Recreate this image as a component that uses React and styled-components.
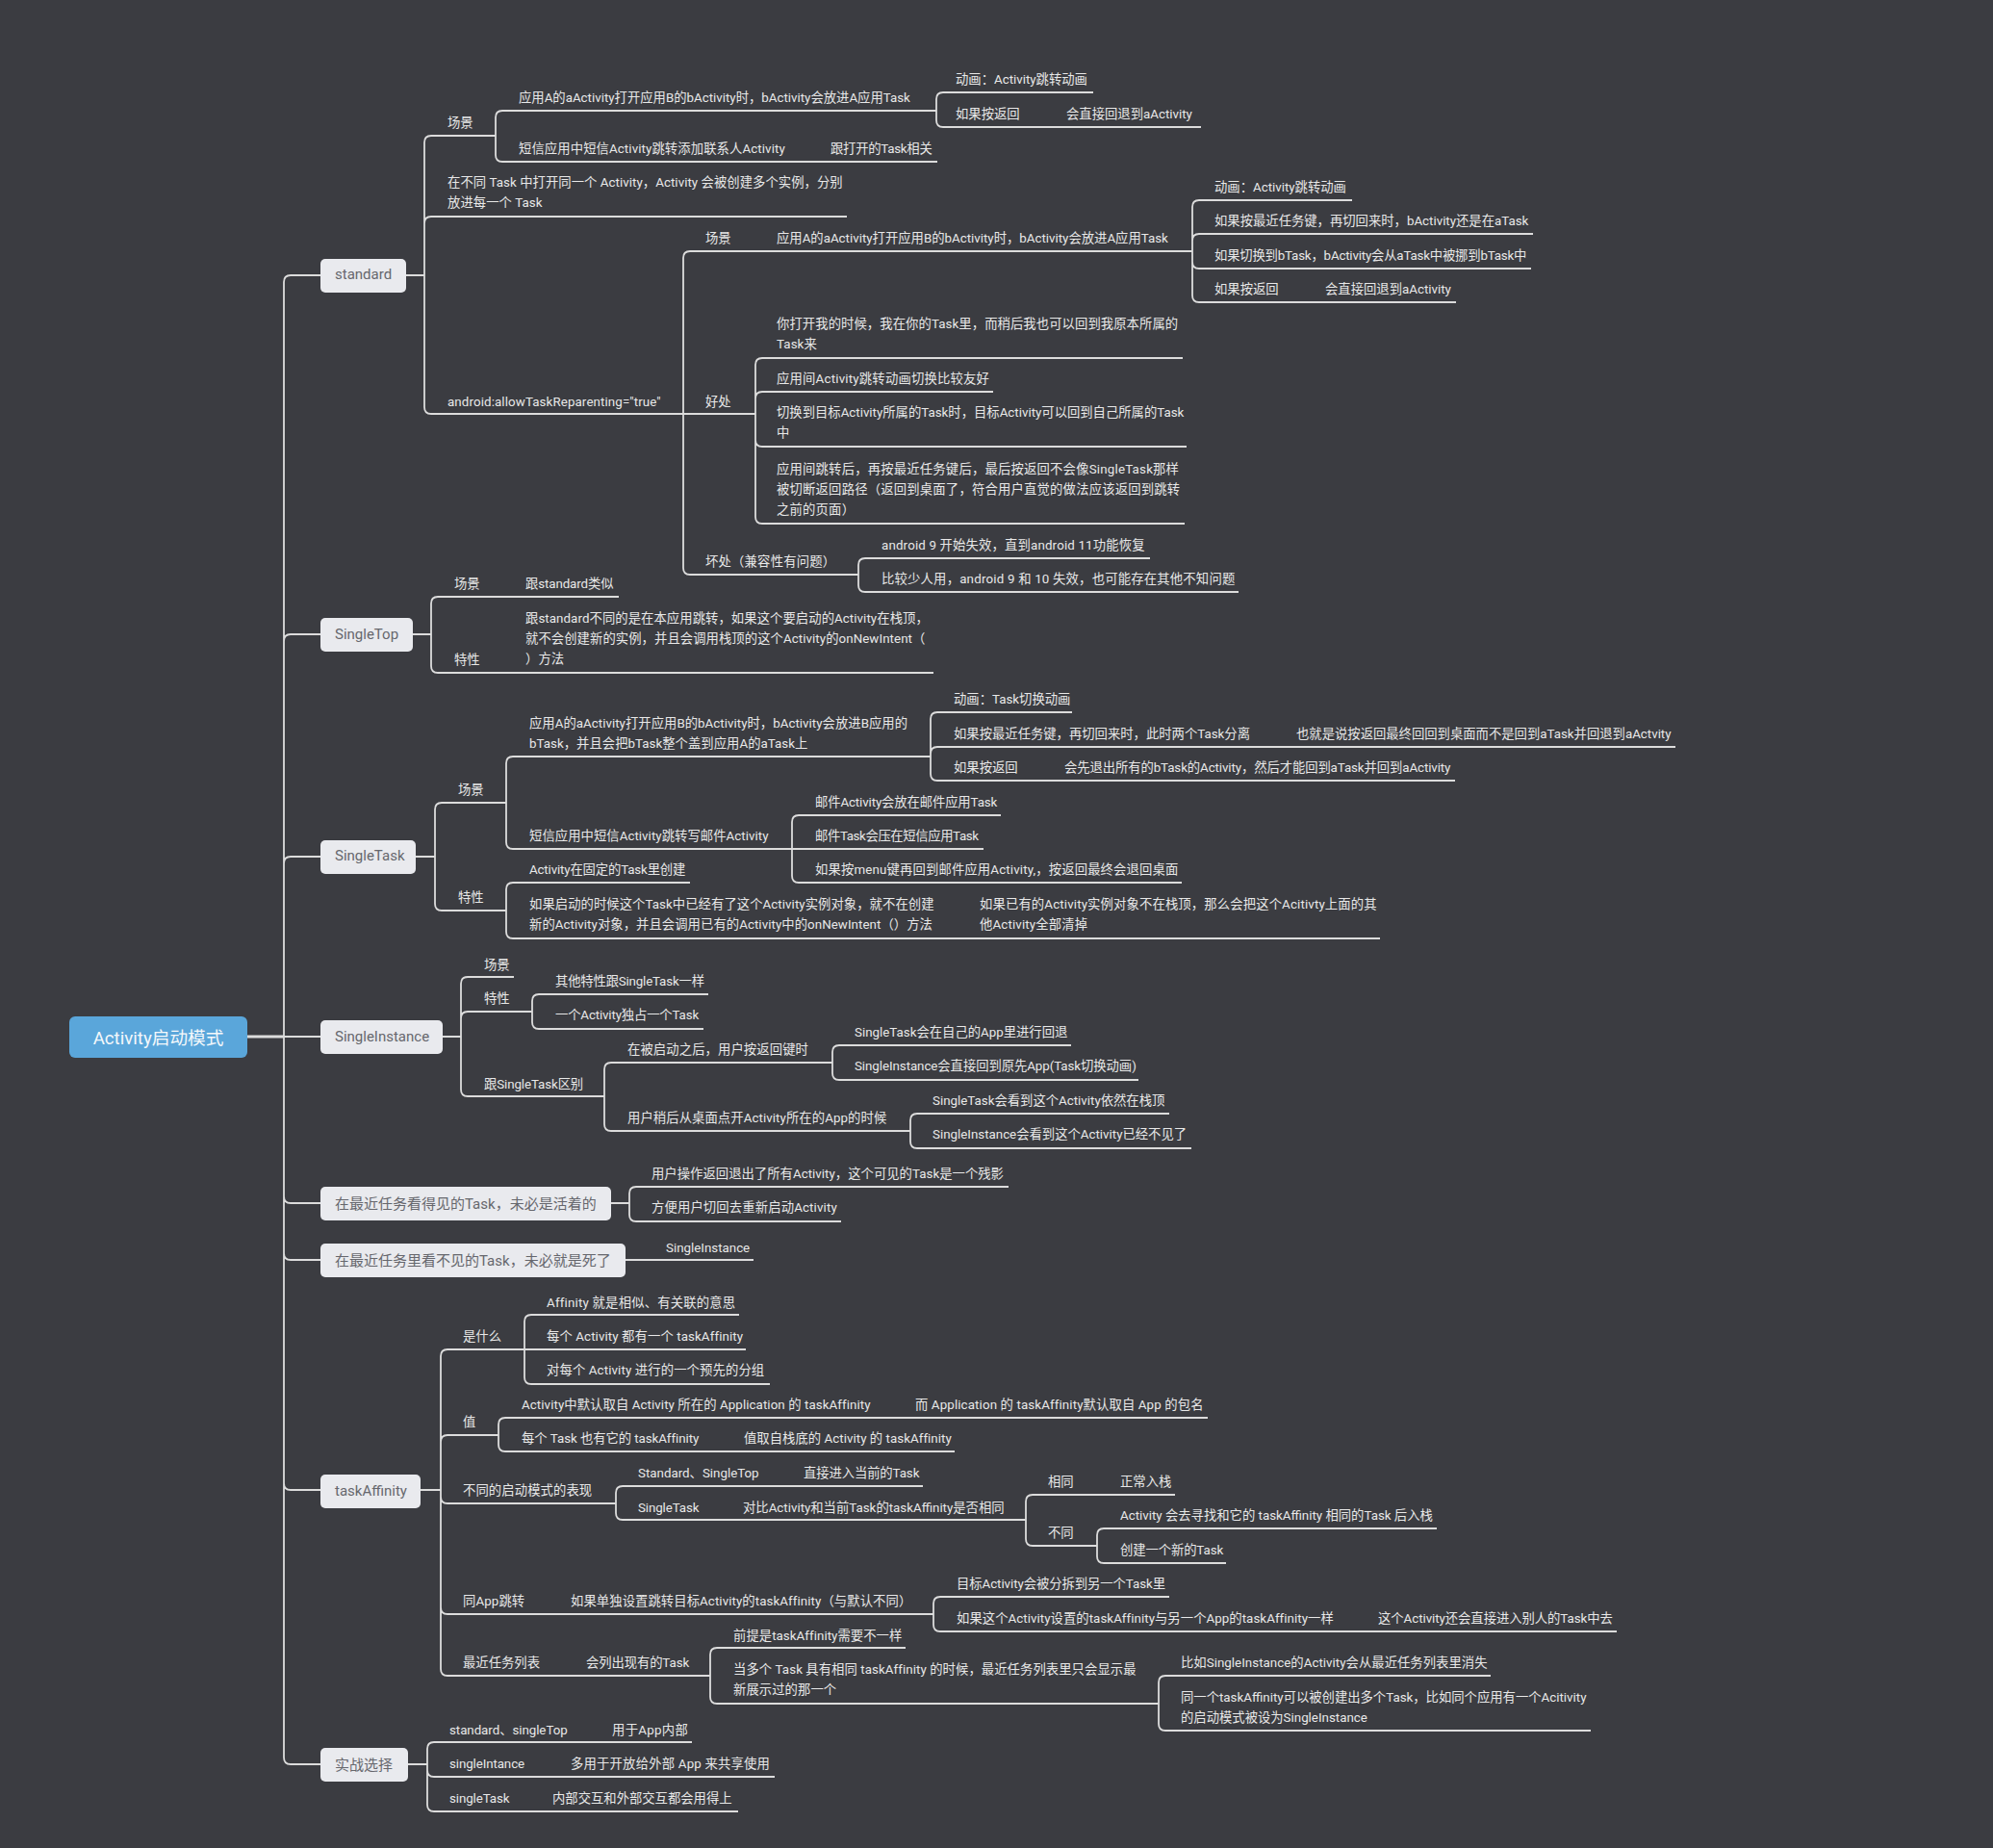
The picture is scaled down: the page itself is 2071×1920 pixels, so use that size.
import styled, { createGlobalStyle } from "styled-components";

const GlobalStyle = createGlobalStyle`
  html, body {
    margin: 0;
    padding: 0;
    background: #3b3c41;
  }
`;

const INK = "#dcdcdc";
const RADIUS = 7;

const Canvas = styled.main`
  position: relative;
  width: 2071px;
  height: 1920px;
  overflow: hidden;
  background: #3b3c41;
  font-family: Roboto, "Noto Sans CJK SC", sans-serif;
`;

const Wires = styled.svg`
  position: absolute;
  inset: 0;
`;

const Wire = styled.path`
  fill: none;
  stroke: ${INK};
  stroke-width: ${(p) => p.$weight || 1.8}px;
`;

const Topic = styled.div`
  position: absolute;
  left: 333px;
  top: ${(p) => p.$cy - 17.5}px;
  width: ${(p) => p.$w}px;
  height: 35px;
  box-sizing: border-box;
  padding: 0 0 2px 15px;
  display: flex;
  align-items: center;
  white-space: nowrap;
  font-size: 15px;
  color: #66676d;
  background: #e9eaee;
  border-radius: 5px;
`;

const RootTopic = styled.div`
  position: absolute;
  left: 72px;
  top: 1056px;
  width: 185px;
  height: 43px;
  box-sizing: border-box;
  padding-bottom: 2px;
  display: flex;
  align-items: center;
  justify-content: center;
  font-size: 18.67px;
  color: #f4f8fb;
  background: #5aa6da;
  border-radius: 6px;
`;

const Note = styled.div`
  position: absolute;
  left: ${(p) => p.$x}px;
  top: ${(p) => p.$y - 10.5}px;
  font-size: 13.33px;
  line-height: 21.33px;
  letter-spacing: ${(p) => p.$track || 0}px;
  white-space: pre;
  color: #e8e8e8;
`;

// [junction x, parent y, parent line start or null, [[child y, child end x], ...]]
const forks = [
  [295, 1077, 257, [[286, 333], [659, 333], [890, 333], [1077, 333], [1250, 333], [1309, 333], [1548, 333], [1833, 333]]],
  [441, 286, 422, [[141, 515], [225, 880], [430, 710]]],
  [515, 141, null, [[115, 973], [168, 974]]],
  [973, 115, null, [[96, 1136], [132, 1248]]],
  [710, 430, null, [[261, 1239], [430, 785], [597, 892]]],
  [1239, 261, null, [[208, 1405], [243, 1593], [279, 1591], [314, 1513]]],
  [785, 430, null, [[372, 1229], [407, 1032], [464, 1233], [544, 1231]]],
  [892, 597, null, [[580, 1195], [615, 1287]]],
  [448, 659, 429, [[620, 643], [699, 970]]],
  [452, 890, 432, [[834, 526], [946, 526]]],
  [526, 834, null, [[786, 967], [882, 823]]],
  [967, 786, null, [[740, 1114], [776, 1741], [811, 1512]]],
  [823, 882, null, [[847, 1040], [882, 1022], [917, 1228]]],
  [526, 946, null, [[917, 717], [975, 1434]]],
  [479, 1077, 460, [[1015, 534], [1051, 553], [1139, 628]]],
  [553, 1051, null, [[1033, 736], [1069, 731]]],
  [628, 1139, null, [[1104, 865], [1175, 946]]],
  [865, 1104, null, [[1086, 1113], [1122, 1183]]],
  [946, 1175, null, [[1157, 1215], [1193, 1238]]],
  [654, 1250, 635, [[1233, 1048], [1269, 874]]],
  [650, 1309, null, [[1309, 783]]],
  [458, 1548, 437, [[1402, 545], [1491, 518], [1562, 640], [1677, 970], [1741, 738]]],
  [545, 1402, null, [[1366, 768], [1402, 775], [1438, 800]]],
  [518, 1491, null, [[1473, 1255], [1508, 992]]],
  [640, 1562, null, [[1544, 959], [1579, 1066]]],
  [1066, 1579, null, [[1553, 1221], [1606, 1140]]],
  [1140, 1606, null, [[1588, 1493], [1624, 1274]]],
  [970, 1677, null, [[1659, 1215], [1695, 1680]]],
  [738, 1741, null, [[1712, 941], [1770, 1204]]],
  [1204, 1770, null, [[1741, 1549], [1798, 1653]]],
  [444, 1833, 424, [[1810, 719], [1846, 805], [1882, 767]]],
];

const forkPath = ([jx, py, start, kids]) => {
  const parts = start ? [`M${start} ${py}H${jx}`] : [];
  kids.forEach(([y, end]) => {
    if (y === py) {
      parts.push(`M${jx} ${y}H${end}`);
      return;
    }
    const dir = y < py ? 1 : -1;
    parts.push(`M${jx} ${py}V${y + dir * RADIUS}Q${jx} ${y} ${jx + RADIUS} ${y}H${end}`);
  });
  return parts.join("");
};

const topics = [
  ["standard", 286, 89],
  ["SingleTop", 659.5, 96],
  ["SingleTask", 890, 99],
  ["SingleInstance", 1077.5, 127],
  ["在最近任务看得见的Task，未必是活着的", 1250.5, 302],
  ["在最近任务里看不见的Task，未必就是死了", 1309.5, 317],
  ["taskAffinity", 1549.5, 104],
  ["实战选择", 1833.5, 91],
];

// [x, centre of first line, text, letter spacing to land on the reference's text width]
const notes = [
  [465, 127, "场景"],
  [539, 101, "应用A的aActivity打开应用B的bActivity时，bActivity会放进A应用Task"],
  [539, 154, "短信应用中短信Activity跳转添加联系人Activity", 0.1],
  [863, 154, "跟打开的Task相关", -0.26],
  [993, 82, "动画：Activity跳转动画"],
  [993, 118, "如果按返回"],
  [1108, 118, "会直接回退到aActivity"],
  [465, 189, "在不同 Task 中打开同一个 Activity，Activity 会被创建多个实例，分别\n放进每一个 Task", 0.05],
  [465, 417, 'android:allowTaskReparenting="true"', 0.11],
  [733, 247, "场景"],
  [807, 247, "应用A的aActivity打开应用B的bActivity时，bActivity会放进A应用Task"],
  [1262, 194, "动画：Activity跳转动画"],
  [1262, 229, "如果按最近任务键，再切回来时，bActivity还是在aTask"],
  [1262, 265, "如果切换到bTask，bActivity会从aTask中被挪到bTask中", -0.18],
  [1262, 300, "如果按返回"],
  [1377, 300, "会直接回退到aActivity"],
  [733, 417, "好处"],
  [807, 336, "你打开我的时候，我在你的Task里，而稍后我也可以回到我原本所属的\nTask来", 0.08],
  [807, 393, "应用间Activity跳转动画切换比较友好", 0.2],
  [807, 428, "切换到目标Activity所属的Task时，目标Activity可以回到自己所属的Task\n中"],
  [807, 487, "应用间跳转后，再按最近任务键后，最后按返回不会像SingleTask那样\n被切断返回路径（返回到桌面了，符合用户直觉的做法应该返回到跳转\n之前的页面）", 0.2],
  [733, 583, "坏处（兼容性有问题）", 0.2],
  [916, 566, "android 9 开始失效，直到android 11功能恢复", 0.16],
  [916, 601, "比较少人用，android 9 和 10 失效，也可能存在其他不知问题", 0.2],

  [472, 606, "场景"],
  [546, 606, "跟standard类似", -0.1],
  [472, 685, "特性"],
  [546, 642, "跟standard不同的是在本应用跳转，如果这个要启动的Activity在栈顶，\n就不会创建新的实例，并且会调用栈顶的这个Activity的onNewIntent（\n）方法", 0.07],

  [476, 820, "场景"],
  [550, 751, "应用A的aActivity打开应用B的bActivity时，bActivity会放进B应用的\nbTask，并且会把bTask整个盖到应用A的aTask上", 0.03],
  [991, 726, "动画：Task切换动画"],
  [991, 762, "如果按最近任务键，再切回来时，此时两个Task分离"],
  [1347, 762, "也就是说按返回最终回回到桌面而不是回到aTask并回退到aActvity"],
  [991, 797, "如果按返回"],
  [1106, 797, "会先退出所有的bTask的Activity，然后才能回到aTask并回到aActivity", -0.09],
  [550, 868, "短信应用中短信Activity跳转写邮件Activity", 0.05],
  [847, 833, "邮件Activity会放在邮件应用Task", -0.12],
  [847, 868, "邮件Task会压在短信应用Task", -0.38],
  [847, 903, "如果按menu键再回到邮件应用Activity,，按返回最终会退回桌面", 0.15],
  [476, 932, "特性"],
  [550, 903, "Activity在固定的Task里创建", -0.15],
  [550, 939, "如果启动的时候这个Task中已经有了这个Activity实例对象，就不在创建\n新的Activity对象，并且会调用已有的Activity中的onNewIntent（）方法", 0.06],
  [1018, 939, "如果已有的Activity实例对象不在栈顶，那么会把这个Acitivty上面的其\n他Activity全部清掉", 0.14],

  [503, 1002, "场景"],
  [503, 1037, "特性"],
  [577, 1019, "其他特性跟SingleTask一样", -0.17],
  [577, 1054, "一个Activity独占一个Task", -0.15],
  [503, 1126, "跟SingleTask区别", -0.1],
  [652, 1090, "在被启动之后，用户按返回键时", 0.1],
  [652, 1161, "用户稍后从桌面点开Activity所在的App的时候", 0.08],
  [888, 1072, "SingleTask会在自己的App里进行回退"],
  [888, 1107, "SingleInstance会直接回到原先App(Task切换动画)", -0.06],
  [969, 1143, "SingleTask会看到这个Activity依然在栈顶"],
  [969, 1178, "SingleInstance会看到这个Activity已经不见了"],

  [677, 1219, "用户操作返回退出了所有Activity，这个可见的Task是一个残影", 0.03],
  [677, 1254, "方便用户切回去重新启动Activity", 0.14],
  [692, 1296, "SingleInstance"],

  [481, 1388, "是什么"],
  [568, 1353, "Affinity 就是相似、有关联的意思", 0.2],
  [568, 1388, "每个 Activity 都有一个 taskAffinity", 0.1],
  [568, 1423, "对每个 Activity 进行的一个预先的分组", 0.12],
  [481, 1477, "值"],
  [542, 1459, "Activity中默认取自 Activity 所在的 Application 的 taskAffinity", 0.08],
  [951, 1459, "而 Application 的 taskAffinity默认取自 App 的包名", 0.12],
  [542, 1494, "每个 Task 也有它的 taskAffinity", -0.06],
  [773, 1494, "值取自栈底的 Activity 的 taskAffinity", 0.04],
  [481, 1548, "不同的启动模式的表现", 0.1],
  [663, 1530, "Standard、SingleTop"],
  [835, 1530, "直接进入当前的Task", -0.1],
  [663, 1566, "SingleTask", -0.1],
  [772, 1566, "对比Activity和当前Task的taskAffinity是否相同"],
  [1089, 1539, "相同"],
  [1164, 1539, "正常入栈"],
  [1089, 1592, "不同"],
  [1164, 1574, "Activity 会去寻找和它的 taskAffinity 相同的Task 后入栈"],
  [1164, 1610, "创建一个新的Task", -0.1],
  [481, 1663, "同App跳转", 0.1],
  [593, 1663, "如果单独设置跳转目标Activity的taskAffinity（与默认不同）", 0.08],
  [994, 1645, "目标Activity会被分拆到另一个Task里", -0.06],
  [994, 1681, "如果这个Activity设置的taskAffinity与另一个App的taskAffinity一样", 0.05],
  [1432, 1681, "这个Activity还会直接进入别人的Task中去", -0.05],
  [481, 1727, "最近任务列表"],
  [609, 1727, "会列出现有的Task", -0.1],
  [762, 1699, "前提是taskAffinity需要不一样", 0.05],
  [762, 1734, "当多个 Task 具有相同 taskAffinity 的时候，最近任务列表里只会显示最\n新展示过的那一个", 0.07],
  [1227, 1727, "比如SingleInstance的Activity会从最近任务列表里消失", 0.03],
  [1227, 1763, "同一个taskAffinity可以被创建出多个Task，比如同个应用有一个Acitivity\n的启动模式被设为SingleInstance"],

  [467, 1797, "standard、singleTop", -0.05],
  [636, 1797, "用于App内部", 0.3],
  [467, 1832, "singleIntance", -0.1],
  [593, 1832, "多用于开放给外部 App 来共享使用", 0.2],
  [467, 1868, "singleTask", -0.1],
  [574, 1868, "内部交互和外部交互都会用得上"],
];

export default function App() {
  return (
    <Canvas>
      <GlobalStyle />
      <Wires width="2071" height="1920" viewBox="0 0 2071 1920">
        {forks.map((fork) => (
          <Wire key={`${fork[0]}-${fork[1]}`} d={forkPath(fork)} />
        ))}
        <Wire d="M257 1077H295" $weight={3.2} />
      </Wires>
      <RootTopic>Activity启动模式</RootTopic>
      {topics.map(([text, cy, w]) => (
        <Topic key={text} $cy={cy} $w={w}>
          {text}
        </Topic>
      ))}
      {notes.map(([x, y, text, track]) => (
        <Note key={`${x}-${y}`} $x={x} $y={y} $track={track}>
          {text}
        </Note>
      ))}
    </Canvas>
  );
}
